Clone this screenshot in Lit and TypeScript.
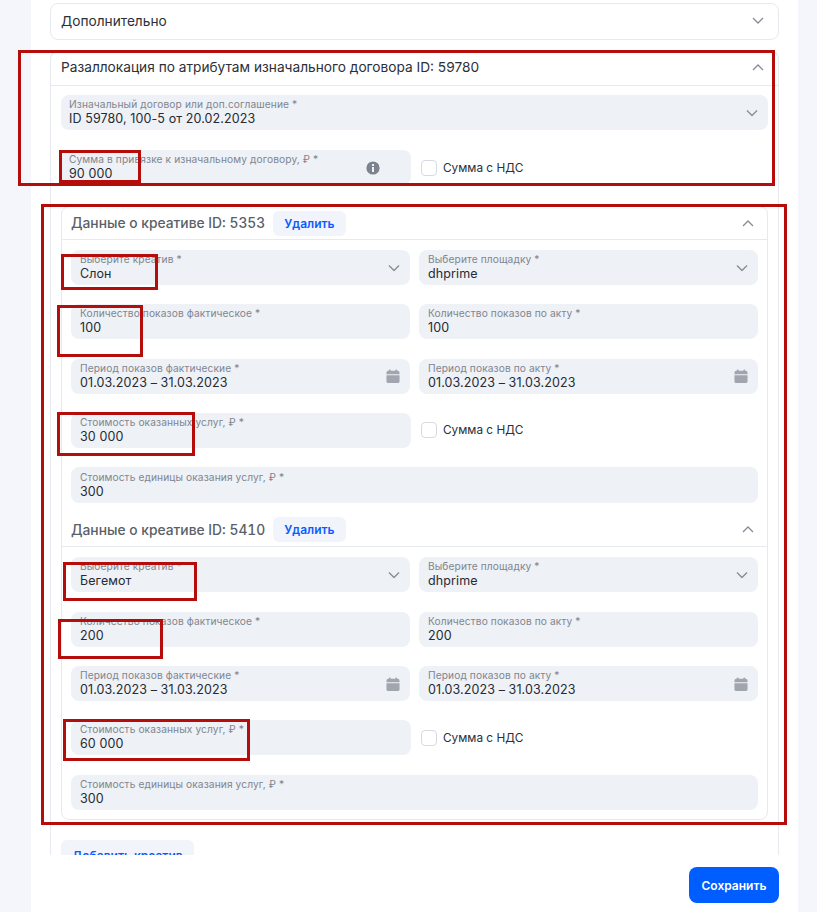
import { LitElement, html, css } from "lit";
import { customElement } from "lit/decorators.js";

const down = html`<svg class="chev" viewBox="0 0 12 7" width="12" height="7"><path d="M1 1 6 6l5-5" fill="none" stroke="#868c96" stroke-width="1.3"/></svg>`;
const up = html`<svg class="chev" viewBox="0 0 12 7" width="12" height="7"><path d="M1 6 6 1l5 5" fill="none" stroke="#868c96" stroke-width="1.3"/></svg>`;
const info = html`<svg viewBox="0 0 14 14" width="14" height="14"><circle cx="7" cy="7" r="6.6" fill="#7d838c"/><rect x="6" y="6" width="2" height="5" fill="#eef1f6"/><rect x="6" y="3" width="2" height="2" fill="#eef1f6"/></svg>`;
const cal = html`<svg viewBox="0 0 15 15" width="14" height="14"><rect x="3" y="0.5" width="2" height="3" rx="1" fill="#a0a5ae"/><rect x="10" y="0.5" width="2" height="3" rx="1" fill="#a0a5ae"/><path d="M0.5 4a2 2 0 0 1 2-2h10a2 2 0 0 1 2 2v1.6H0.5z" fill="#a0a5ae"/><path d="M0.5 6.6h14V13a2 2 0 0 1-2 2h-10a2 2 0 0 1-2-2z" fill="#a0a5ae"/></svg>`;

const marks = [
  [18, 50, 757, 136],
  [59, 150, 82, 33],
  [41, 204, 746, 621],
  [61, 254, 97, 36],
  [57, 305, 86, 52],
  [57, 412, 138, 44],
  [63, 562, 134, 39],
  [58, 619, 105, 40],
  [63, 719, 187, 42],
];

@customElement("app-root")
export class AppRoot extends LitElement {
  static styles = css`
    :host { display: block; position: relative; width: 817px; height: 912px; overflow: hidden; background: #f4f6fb; font-family: Inter, "Noto Sans", sans-serif; color: #262b33; }
    * { box-sizing: border-box; }
    .panel { margin: 0 19px 0 31px; height: 912px; background: #fff; padding: 3px 19px 0; display: flex; flex-direction: column; }
    .scroll { height: 852px; overflow: hidden; flex: none; }
    .card { border: 1px solid #e6e9ee; border-radius: 8px; }
    .head { display: flex; align-items: center; justify-content: space-between; }
    .top { height: 37px; padding: 0 14px 2px 10px; font-size: 13.7px; color: #2c3038; }
    .main { margin-top: 11px; border-bottom-left-radius: 0; border-bottom-right-radius: 0; border-bottom: none; height: 860px; }
    .main > .head { height: 34px; padding-bottom: 3px; border-bottom: 1px solid #e6e9ee; }
    .main-body { padding: 9px 10px 0; }
    .gap { height: 20px; }
    .field { position: relative; height: 35px; background: #eef1f6; border-radius: 8px; padding: 2px 8px 0 9px; display: block; }
    .field.tall { height: 36px; padding-top: 3px; }
    .lbl { display: block; font-size: 10.2px; line-height: 14px; color: #7f858f; white-space: nowrap; letter-spacing: 0.1px; }
    .val { display: block; font-size: 12.5px; line-height: 16px; color: #262b33; white-space: nowrap; letter-spacing: 0.1px; }
    .main-body > .field, .w .field { padding-left: 8px; }
    .ico { position: absolute; top: 50%; right: 10px; transform: translateY(-50%); display: flex; }
    .ico.inf { right: 31px; }
    .row { display: flex; align-items: center; }
    .w { width: 350px; flex: none; }
    .check { display: flex; align-items: center; gap: 6px; margin-left: 10px; font-size: 11.8px; color: #2c3038; }
    .box { width: 16px; height: 16px; border: 1px solid #d5dae2; border-radius: 4px; background: #fff; flex: none; }
    .inner { margin-top: 21px; border: 1px solid #e6e9ee; border-radius: 8px; padding-bottom: 9px; }
    .ihead { height: 33px; margin-bottom: 10px; padding: 0 13px 0 9px; border-bottom: 1px solid #e6e9ee; }
    .ihead.second { margin-top: 14.25px; height: 30px; align-items: flex-start; }
    .ititle { display: flex; align-items: center; gap: 8px; font-size: 13.8px; font-weight: 500; color: #5a5f68; font-variant-numeric: tabular-nums; }
    .ihead.second .chev { margin-top: 9px; }
    .del { height: 25px; padding: 0 11px; border-radius: 6px; background: #f1f4fa; color: #0b5cff; font: 600 12px Inter, sans-serif; display: flex; align-items: center; }
    .grid { display: flex; flex-direction: column; gap: 19.3px; padding: 0 9px; }
    .cols { display: grid; grid-template-columns: 339px 339px; column-gap: 9px; }
    .one { width: 340px; }
    .add { display: inline-flex; align-items: center; margin-top: 20px; height: 32px; padding: 0 11px; background: #f1f4fa; border-radius: 6px; color: #0b5cff; font-size: 12px; font-weight: 600; }
    .foot { display: flex; justify-content: flex-end; padding-top: 12px; }
    .save { height: 36px; width: 90px; border: none; border-radius: 8px; background: #005dff; color: #fff; font: 600 12px Inter, sans-serif; }
    .mark { position: absolute; border: 3px solid #b50c0c; pointer-events: none; }
  `;

  private field(label: string, value: string, icon: unknown = null, cls = "") {
    return html`<div class="field ${cls}"><span class="lbl">${label}</span><span class="val">${value}</span>${icon}</div>`;
  }

  private creative(id: string, name: string, count: string, factLabel: string, cost: string, second: boolean) {
    return html`
      <div class="head ihead ${second ? "second" : ""}">
        <div class="ititle">Данные о креативе ID: ${id} <span class="del">Удалить</span></div>
        ${up}
      </div>
      <div class="grid">
        <div class="cols">
          ${this.field("Выберите креатив *", name, html`<span class="ico">${down}</span>`)}
          ${this.field("Выберите площадку *", "dhprime", html`<span class="ico">${down}</span>`)}
        </div>
        <div class="cols">
          ${this.field("Количество показов фактическое *", count)}
          ${this.field("Количество показов по акту *", count)}
        </div>
        <div class="cols">
          ${this.field(factLabel, "01.03.2023 – 31.03.2023", html`<span class="ico">${cal}</span>`)}
          ${this.field("Период показов по акту *", "01.03.2023 – 31.03.2023", html`<span class="ico">${cal}</span>`)}
        </div>
        <div class="row">
          <div class="one">${this.field("Стоимость оказанных услуг, ₽ *", cost)}</div>
          <label class="check"><span class="box"></span>Сумма с НДС</label>
        </div>
        ${this.field("Стоимость единицы оказания услуг, ₽ *", "300", null, second ? "" : "tall")}
      </div>
    `;
  }

  render() {
    return html`
      <div class="panel">
        <div class="scroll">
          <div class="card head top">Дополнительно ${down}</div>
          <div class="card main">
            <div class="head top">Разаллокация по атрибутам изначального договора ID: 59780 ${up}</div>
            <div class="main-body">
              ${this.field("Изначальный договор или доп.соглашение *", "ID 59780, 100-5 от 20.02.2023", html`<span class="ico">${down}</span>`)}
              <div class="gap"></div>
              <div class="row">
                <div class="w">${this.field("Сумма в привязке к изначальному договору, ₽ *", "90 000", html`<span class="ico inf">${info}</span>`)}</div>
                <label class="check"><span class="box"></span>Сумма с НДС</label>
              </div>
              <div class="inner">
                ${this.creative("5353", "Слон", "100", "Период показов фактические *", "30 000", false)}
                ${this.creative("5410", "Бегемот", "200", "Период показов фактические *", "60 000", true)}
              </div>
              <div class="add">Добавить креатив</div>
            </div>
          </div>
        </div>
        <div class="foot"><button class="save">Сохранить</button></div>
      </div>
      ${marks.map(([x, y, w, h]) => html`<div class="mark" style="left:${x}px;top:${y}px;width:${w}px;height:${h}px"></div>`)}
    `;
  }
}
